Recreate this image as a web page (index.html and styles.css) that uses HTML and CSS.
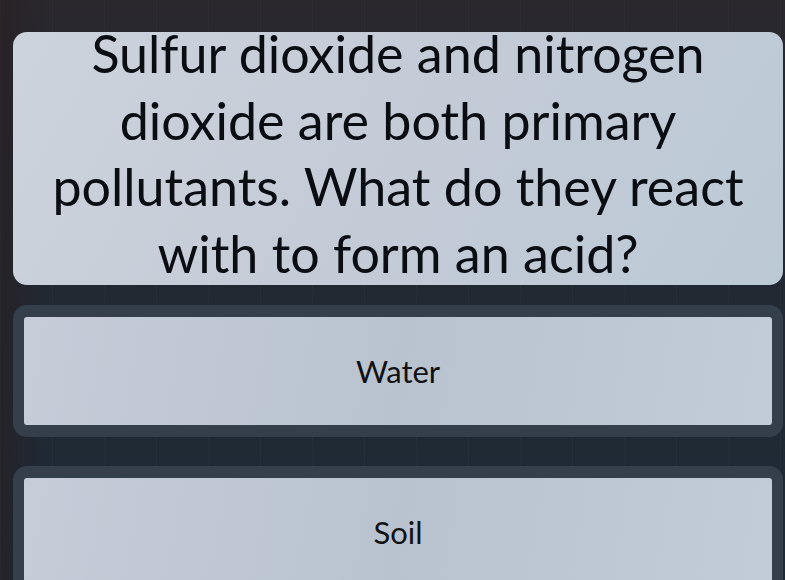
FILE: index.html
```html
<!DOCTYPE html>
<html lang="en">
<head>
  <meta charset="UTF-8" />
  <meta name="viewport" content="width=device-width, initial-scale=1.0" />
  <title>Quiz</title>
  <link rel="stylesheet" href="styles.css">
</head>
<body>
  <div class="quiz">
    <div class="question">
      <p>Sulfur dioxide and nitrogen dioxide are both primary pollutants. What do they react with to form an acid?</p>
    </div>

    <div class="answers">
      <button class="answer"><span>Water</span></button>
      <button class="answer"><span>Soil</span></button>
    </div>
  </div>
</body>
</html>
```

FILE: styles.css
```css
body {
  margin: 0;
  font-family: Lato, 'Open Sans', sans-serif;
  background-color: #1f2a35;
  background-image:
    repeating-linear-gradient(90deg, rgba(255,255,255,0.025) 0 1px, transparent 1px 52px),
    linear-gradient(90deg, rgba(40,30,34,0.6) 0%, transparent 6%),
    linear-gradient(180deg, #2a282d 0%, #232831 25%, #1d2a36 100%);
  min-height: 580px;
  overflow: hidden;
}
.quiz {
  padding: 32px 2px 0 13px;
}
.question {
  display: flow-root;
  background: linear-gradient(120deg, #cdd3dd 0%, #c3cbd6 50%, #bccad6 100%);
  color: #0a0d12;
  border-radius: 14px;
  text-align: center;
  padding: 0 20px;
  height: 253px;
  box-sizing: border-box;
}
.question p {
  margin: -12px 0 0;
  font-size: 52px;
  line-height: 66.5px;
}
.answers {
  display: flex;
  flex-direction: column;
  gap: 29px;
  margin-top: 20px;
}
.answer {
  display: block;
  width: 100%;
  height: 132px;
  padding: 12px 11px;
  border: none;
  border-radius: 14px;
  background-color: #343f4b;
  font-family: inherit;
  cursor: pointer;
}
.answer span {
  display: flex;
  align-items: center;
  justify-content: center;
  height: 100%;
  background: linear-gradient(100deg, #c6ccd8 0%, #b9c3d0 50%, #c2ccd8 100%);
  border-radius: 3px;
  color: #111;
  font-size: 31px;
}
```
